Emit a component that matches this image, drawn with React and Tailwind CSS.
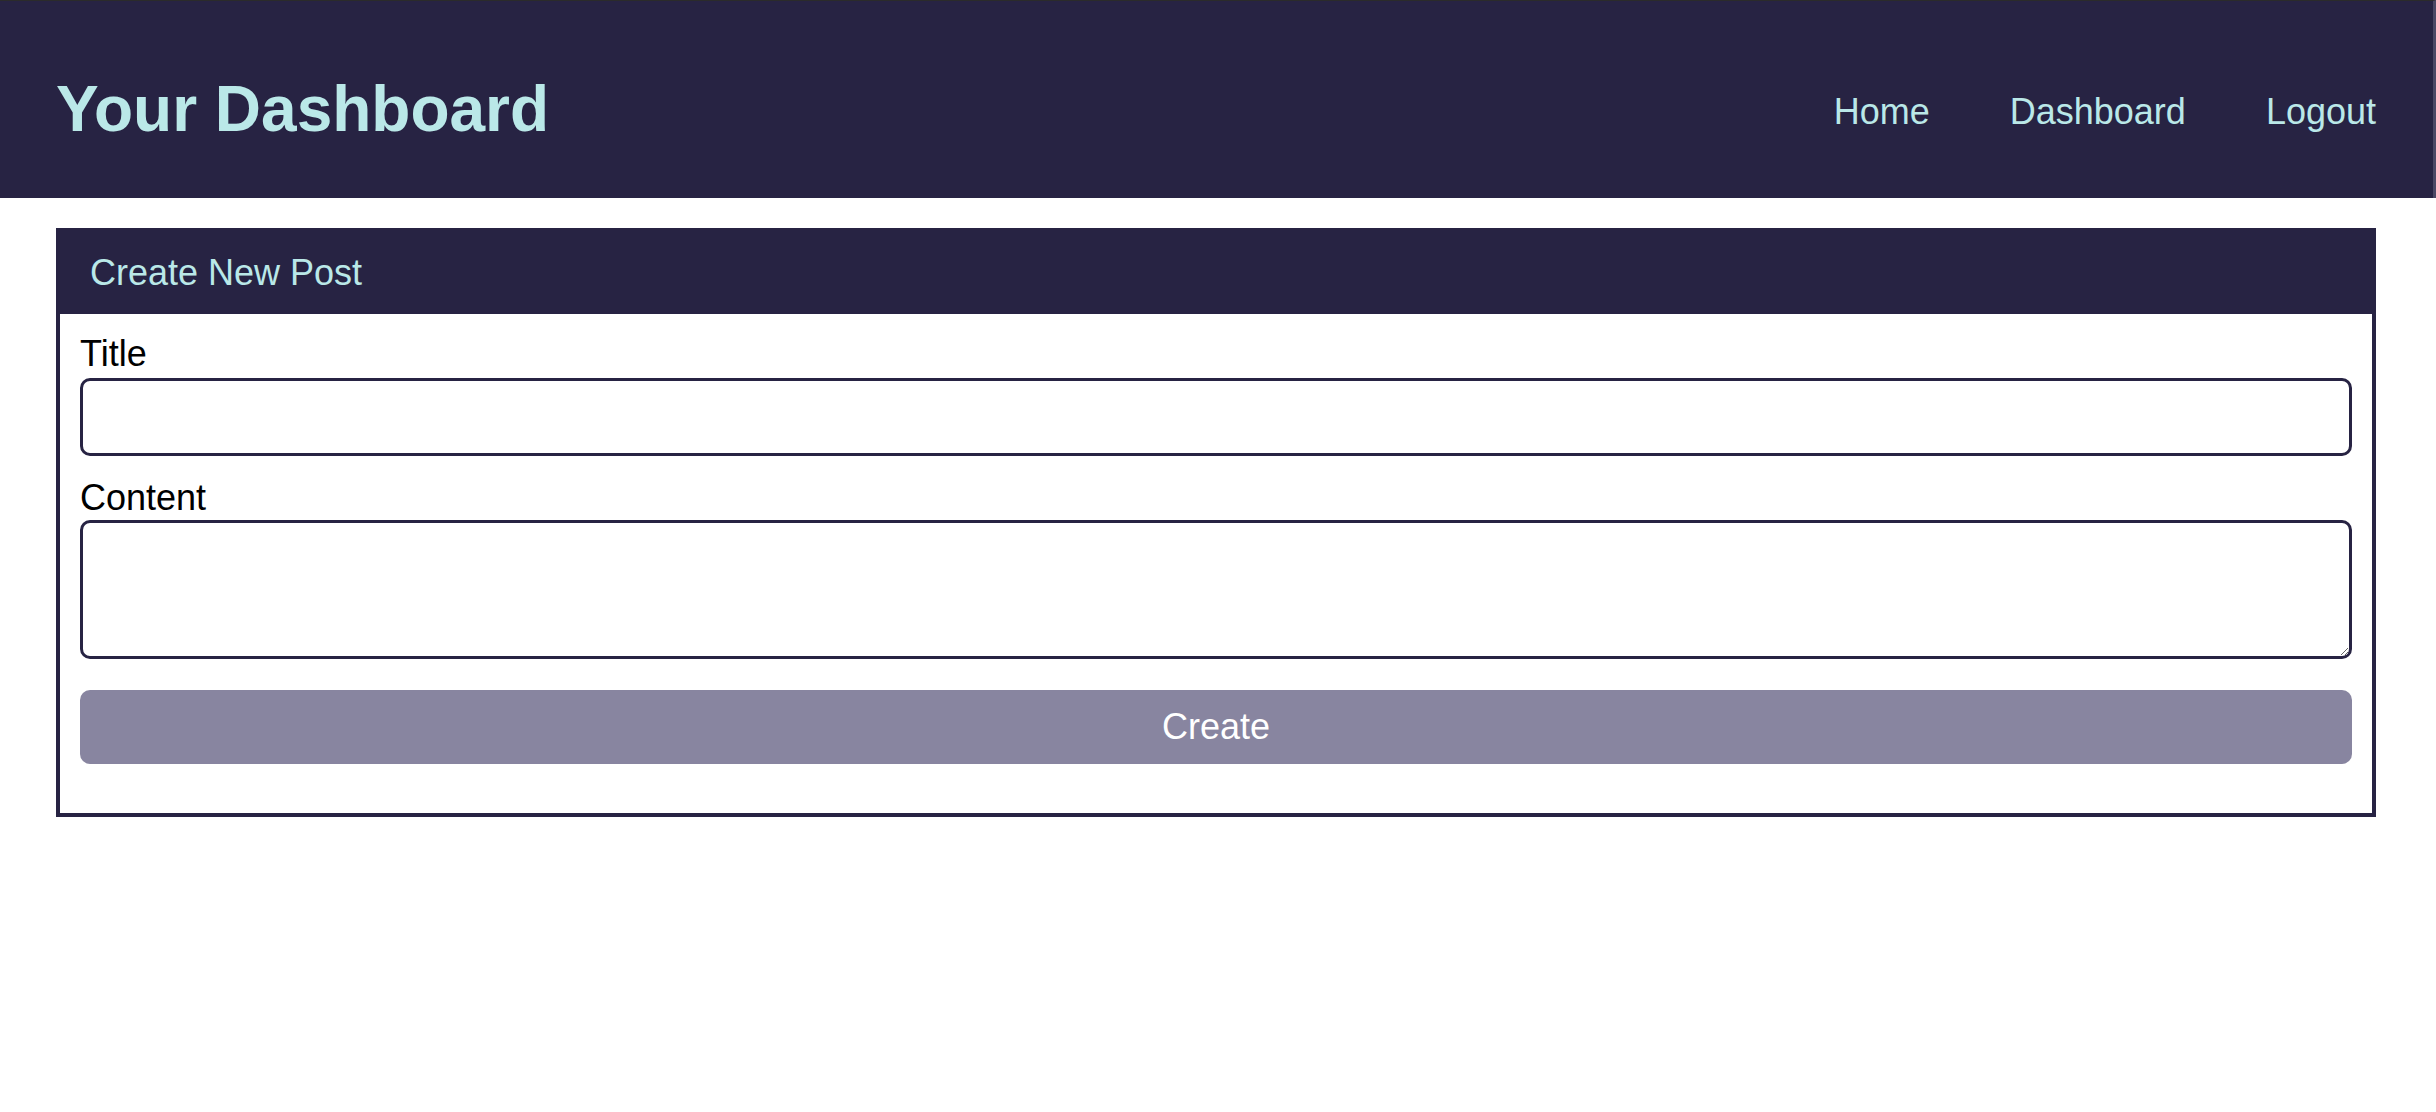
import { useState } from "react";

function App() {
  const [title, setTitle] = useState("");
  const [content, setContent] = useState("");

  const handleSubmit = (e) => {
    e.preventDefault();
  };

  return (
    <div className="min-h-screen bg-white font-['Liberation_Sans',Arial,sans-serif]">
      <header className="flex justify-between items-start bg-[#272343] border-t border-t-[#2b2b2b] border-r-[3px] border-r-[#4a4764] pl-[56px] pr-[57px] pt-[71px] pb-[52px]">
        <h1 className="text-[64px] font-bold leading-[normal] text-[#bae8e8]">
          Your Dashboard
        </h1>

        <nav className="flex gap-[80px] mt-[19px] text-[36px] leading-[normal] text-[#bae8e8]">
          <a href="#">Home</a>
          <a href="#">Dashboard</a>
          <a href="#">Logout</a>
        </nav>
      </header>

      <main className="pl-[56px] pr-[60px] pt-[30px]">
        <div className="border-4 border-[#272343]">
          <div className="h-[82px] flex items-center px-[30px] bg-[#272343] text-[36px] leading-[normal] text-[#bae8e8]">
            Create New Post
          </div>

          <form onSubmit={handleSubmit} className="px-[20px] pt-[19px] pb-[49px]">
            <label className="block text-[36px] leading-[normal] text-black">
              Title
            </label>
            <input
              type="text"
              value={title}
              onChange={(e) => setTitle(e.target.value)}
              className="block w-full h-[78px] mt-[3px] px-3 text-[32px] border-[3px] border-[#272343] rounded-[10px] outline-none"
            />

            <label className="block mt-[21px] text-[36px] leading-[normal] text-black">
              Content
            </label>
            <textarea
              value={content}
              onChange={(e) => setContent(e.target.value)}
              className="block w-full h-[139px] mt-[1px] px-3 py-2 text-[32px] border-[3px] border-[#272343] rounded-[10px] outline-none"
            ></textarea>

            <button
              type="submit"
              className="block w-full h-[74px] mt-[31px] bg-[#8885a0] text-white text-[36px] leading-[normal] rounded-[10px]"
            >
              Create
            </button>
          </form>
        </div>
      </main>
    </div>
  );
}

export default App;
